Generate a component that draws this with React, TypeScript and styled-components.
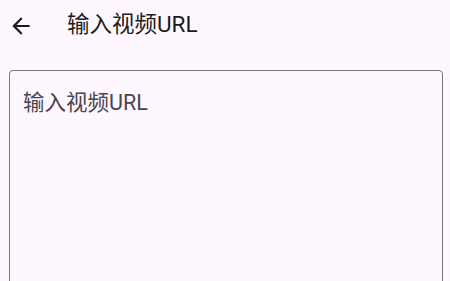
import styled, { createGlobalStyle } from 'styled-components'

const GlobalStyle = createGlobalStyle`
  html, body {
    margin: 0;
    padding: 0;
    background: #fef7ff;
    overflow: hidden;
  }
  body {
    font-family: Roboto, "Noto Sans CJK SC", sans-serif;
  }
`

const Page = styled.div`
  width: 450px;
  height: 281px;
  background: #fef7ff;
  display: flex;
  flex-direction: column;
  overflow: hidden;
`

const AppBar = styled.header`
  flex-shrink: 0;
  height: 48px;
  display: flex;
  align-items: center;
  padding-left: 8px;
  gap: 33px;
`

const BackButton = styled.button`
  width: 26px;
  height: 26px;
  padding: 0;
  border: none;
  background: transparent;
  color: #1d1b20;
  display: flex;
  align-items: center;
  justify-content: center;
  margin-top: 4px;
  cursor: pointer;
`

const Title = styled.h1`
  margin: 0;
  font-size: 22.5px;
  font-weight: 400;
  line-height: 28px;
  color: #1d1b20;
`

const Body = styled.main`
  flex-shrink: 0;
  padding: 22px 7px 0 9px;
`

const UrlField = styled.textarea`
  display: block;
  box-sizing: border-box;
  width: 100%;
  height: 260px;
  margin: 0;
  padding: 19px 13px;
  border: 1.3px solid #79747e;
  border-radius: 4px;
  background: transparent;
  resize: none;
  outline: none;
  font-family: Roboto, "Noto Sans CJK SC", sans-serif;
  font-size: 21.5px;
  line-height: 25px;
  color: #1d1b20;

  &::placeholder {
    color: #49454f;
  }
`

const ArrowBack = () => (
  <svg width="26" height="26" viewBox="0 0 24 24" fill="currentColor">
    <path d="M20 11H7.83l5.59-5.59L12 4l-8 8 8 8 1.41-1.41L7.83 13H20v-2z" />
  </svg>
)

export default function App() {
  return (
    <Page>
      <GlobalStyle />
      <AppBar>
        <BackButton aria-label="返回">
          <ArrowBack />
        </BackButton>
        <Title>输入视频URL</Title>
      </AppBar>
      <Body>
        <UrlField placeholder="输入视频URL" />
      </Body>
    </Page>
  )
}
